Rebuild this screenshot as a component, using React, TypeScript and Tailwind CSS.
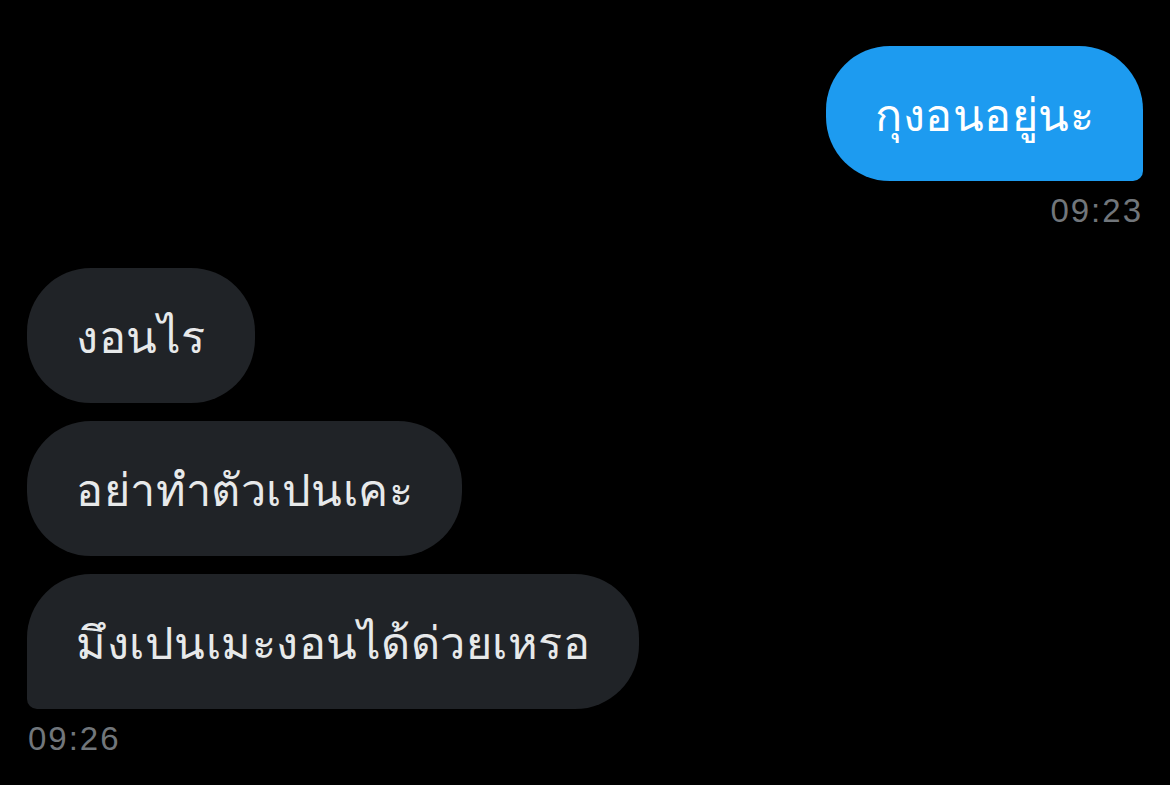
import React from 'react';

const thai = { fontFamily: '"Noto Sans", "DejaVu Sans", sans-serif' };

function Bubble({ text, mine, tail }: { text: string; mine?: boolean; tail?: boolean }) {
    const shape = mine
        ? 'bg-[#1d9bf0] text-white rounded-[64px] rounded-br-[10px]'
        : tail
            ? 'bg-[#202327] text-[#e7e9ea] rounded-[64px] rounded-bl-[10px]'
            : 'bg-[#202327] text-[#e7e9ea] rounded-[64px]';
    return (
        <div className={`${shape} px-[49px] h-[135px] flex items-center text-[45px] tracking-[0.5px] whitespace-nowrap`} style={thai}>
            {text}
        </div>
    );
}

function Time({ t }: { t: string }) {
    return (
        <div className="text-[#71767b] text-[33px] leading-[36px] tracking-[2px] font-['Liberation_Sans',sans-serif]">
            {t}
        </div>
    );
}

export default function App() {
    return (
        <main className="min-h-screen w-full bg-black px-[27px] pt-[46px] flex flex-col">
            <div className="flex flex-col items-end">
                <Bubble text="กุงอนอยู่นะ" mine />
                <div className="mt-[12px]">
                    <Time t="09:23" />
                </div>
            </div>
            <div className="flex flex-col items-start gap-[18px] mt-[39px]">
                <Bubble text="งอนไร" />
                <Bubble text="อย่าทำตัวเปนเคะ" />
                <Bubble text="มึงเปนเมะงอนได้ด่วยเหรอ" tail />
            </div>
            <div className="mt-[12px] pl-[1px]">
                <Time t="09:26" />
            </div>
        </main>
    );
}
